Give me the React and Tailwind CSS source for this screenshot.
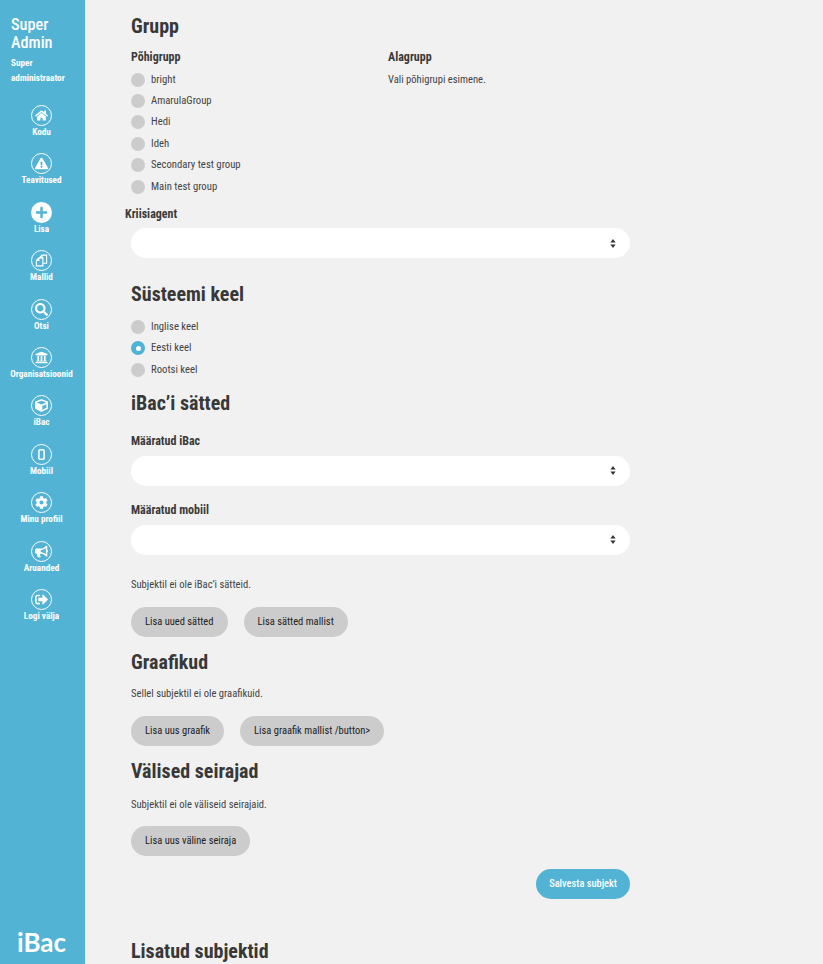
import {
  FaHome, FaExclamationTriangle, FaPlus, FaSearch, FaUniversity, FaCube,
  FaCog, FaBullhorn, FaSignOutAlt,
} from "react-icons/fa";

const TemplatesIcon = ({ className }) => (
  <svg viewBox="0 0 14 14" className={className} fill="none" stroke="currentColor" strokeWidth="1.2">
    <path d="M5 4 7.5 1.2h5V10H8.5" />
    <path d="M7.5 1.2V4H5" />
    <path d="M1.5 7 4.2 4.2h4.3v8.6h-7z" />
    <path d="M4.2 4.2V7H1.5" />
  </svg>
);

const PhoneIcon = ({ className }) => (
  <svg viewBox="0 0 14 14" className={className} fill="none" stroke="currentColor" strokeWidth="1.6">
    <rect x="4.2" y="2" width="5.6" height="10" rx="1" />
  </svg>
);

const navItems = [
  { label: "Kodu", icon: FaHome },
  { label: "Teavitused", icon: FaExclamationTriangle },
  { label: "Lisa", icon: FaPlus, filled: true },
  { label: "Mallid", icon: TemplatesIcon },
  { label: "Otsi", icon: FaSearch },
  { label: "Organisatsioonid", icon: FaUniversity },
  { label: "iBac", icon: FaCube },
  { label: "Mobiil", icon: PhoneIcon },
  { label: "Minu profiil", icon: FaCog },
  { label: "Aruanded", icon: FaBullhorn },
  { label: "Logi välja", icon: FaSignOutAlt },
];

const groups = ["bright", "AmarulaGroup", "Hedi", "Ideh", "Secondary test group", "Main test group"];
const languages = [
  { label: "Inglise keel" },
  { label: "Eesti keel", checked: true },
  { label: "Rootsi keel" },
];

const NavItem = ({ label, icon: Icon, filled }) => (
  <div className="flex h-[48.4px] flex-col items-center text-white">
    <div
      className={
        filled
          ? "flex h-[21px] w-[21px] items-center justify-center rounded-full bg-white text-[#52b3d5]"
          : "flex h-[21px] w-[21px] items-center justify-center rounded-full border border-white"
      }
    >
      <Icon className="h-[13px] w-[13px]" />
    </div>
    <span className="text-[9.2px] leading-[12px] font-bold whitespace-nowrap [font-stretch:75%]">{label}</span>
  </div>
);

const Radio = ({ label, checked }) => (
  <div className="flex h-[21.4px] items-center gap-[6px]">
    <span
      className={
        checked
          ? "flex h-[14px] w-[14px] items-center justify-center rounded-full bg-[#4fb3d6]"
          : "h-[14px] w-[14px] rounded-full bg-[#cccccc]"
      }
    >
      {checked && <span className="h-[5px] w-[5px] rounded-full bg-white" />}
    </span>
    <span className="text-[10.7px] text-[#444444] [font-stretch:75%]">{label}</span>
  </div>
);

const Heading = ({ children, className = "" }) => (
  <h2 className={`text-[20px] leading-[24px] font-bold text-[#383838] [font-stretch:75%] ${className}`}>{children}</h2>
);

const FieldLabel = ({ children, className = "" }) => (
  <div className={`text-[12px] leading-[14px] font-bold text-[#3a3a3a] [font-stretch:75%] ${className}`}>{children}</div>
);

const SelectBox = ({ className = "" }) => (
  <div className={`flex h-[30px] w-[499px] items-center justify-end rounded-full bg-white pr-[14px] ${className}`}>
    <svg width="6" height="9" viewBox="0 0 6 9" className="fill-[#333333]">
      <path d="M3 0l2.6 3.4H.4zM3 9L.4 5.6h5.2z" />
    </svg>
  </div>
);

const Pill = ({ children, className = "" }) => (
  <button
    type="button"
    className={`flex h-[30px] items-center rounded-full bg-[#cccccc] px-[14px] text-[10.5px] whitespace-nowrap text-[#222222] [font-stretch:75%] ${className}`}
  >
    {children}
  </button>
);

const Muted = ({ children, className = "" }) => (
  <p className={`text-[10.6px] leading-[14px] text-[#444444] [font-stretch:75%] ${className}`}>{children}</p>
);

export default function App() {
  return (
    <div className="flex h-[964px] overflow-hidden bg-[#f1f1f1] font-['Roboto',sans-serif]">
      {/* sidebar */}
      <aside className="flex w-[85px] shrink-0 flex-col bg-[#52b3d5]">
        <div className="px-[11px] pt-[16px] text-white">
          <div className="text-[16.2px] leading-[17.5px] font-medium [font-stretch:75%]">Super Admin</div>
          <div className="mt-[4px] text-[9.2px] leading-[15px] font-bold [font-stretch:75%]">Super administraator</div>
        </div>
        <nav className="mt-[20px] flex flex-col pr-[2px]">
          {navItems.map((item) => (
            <NavItem key={item.label} {...item} />
          ))}
        </nav>
        <div className="mt-auto pr-[2px] pb-[7px] text-center font-['Lato',sans-serif] text-[26px] leading-[30px] font-bold text-white">
          iBac
        </div>
      </aside>

      {/* main */}
      <main className="relative pt-[14px] pl-[46px]">
        <Heading>Grupp</Heading>
        <div className="mt-[12px] flex">
          <div className="w-[257px]">
            <FieldLabel className="mb-[5px]">Põhigrupp</FieldLabel>
            {groups.map((g) => (
              <Radio key={g} label={g} />
            ))}
          </div>
          <div>
            <FieldLabel>Alagrupp</FieldLabel>
            <Muted className="mt-[9px]">Vali põhigrupi esimene.</Muted>
          </div>
        </div>

        <FieldLabel className="mt-[10px] -ml-[6px]">Kriisiagent</FieldLabel>
        <SelectBox className="mt-[7px]" />

        <Heading className="mt-[24px]">Süsteemi keel</Heading>
        <div className="mt-[10px]">
          {languages.map((l) => (
            <Radio key={l.label} {...l} />
          ))}
        </div>

        <Heading className="mt-[10px]">iBac’i sätted</Heading>
        <FieldLabel className="mt-[19px]">Määratud iBac</FieldLabel>
        <SelectBox className="mt-[8px]" />
        <FieldLabel className="mt-[17px]">Määratud mobiil</FieldLabel>
        <SelectBox className="mt-[8px]" />
        <Muted className="mt-[23px]">Subjektil ei ole iBac’i sätteid.</Muted>
        <div className="mt-[15px] flex gap-[16px]">
          <Pill>Lisa uued sätted</Pill>
          <Pill>Lisa sätted mallist</Pill>
        </div>

        <Heading className="mt-[13px]">Graafikud</Heading>
        <Muted className="mt-[13px]">Sellel subjektil ei ole graafikuid.</Muted>
        <div className="mt-[15px] flex gap-[16px]">
          <Pill>Lisa uus graafik</Pill>
          <Pill>Lisa graafik mallist /button&gt;</Pill>
        </div>

        <Heading className="mt-[13px]">Välised seirajad</Heading>
        <Muted className="mt-[15px]">Subjektil ei ole väliseid seirajaid.</Muted>
        <div className="mt-[14px] flex gap-[16px]">
          <Pill>Lisa uus väline seiraja</Pill>
        </div>

        <div className="mt-[13px] flex w-[499px] justify-end">
          <button
            type="button"
            className="h-[30px] rounded-full bg-[#52b3d5] px-[13px] text-[10.4px] font-medium text-white [font-stretch:75%]"
          >
            Salvesta subjekt
          </button>
        </div>

        <Heading className="mt-[40px]">Lisatud subjektid</Heading>
      </main>
    </div>
  );
}
